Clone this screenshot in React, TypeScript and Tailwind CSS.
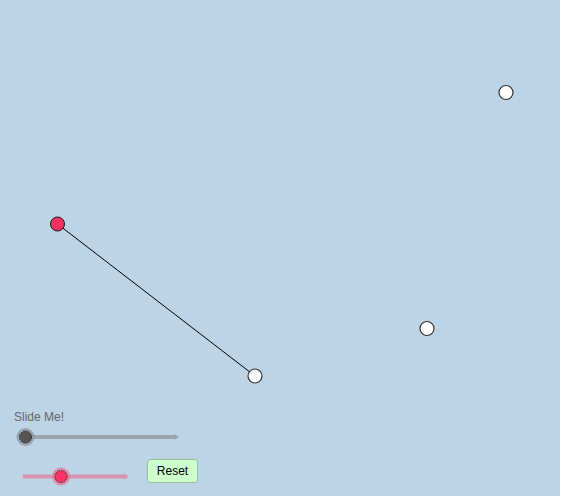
export default function App() {
  return (
    <div className="w-[562px] h-[498px] bg-white" style={{ fontFamily: '"Liberation Sans", Arial, sans-serif' }}>
      <div className="relative w-[560px] h-[496px] bg-[#bdd3e6] overflow-hidden">
        <svg className="absolute inset-0" width="560" height="496" viewBox="0 0 560 496">
          <line x1="57.5" y1="224" x2="255" y2="376" stroke="#000" strokeWidth="1" />
          <circle cx="57.5" cy="224" r="7" fill="#f4325f" stroke="#1a1a1a" strokeWidth="1" />
          <circle cx="255" cy="376" r="7" fill="#fff" stroke="#333" strokeWidth="1.2" />
          <circle cx="506" cy="92.5" r="7" fill="#fff" stroke="#333" strokeWidth="1.2" />
          <circle cx="427" cy="328.5" r="7" fill="#fff" stroke="#333" strokeWidth="1.2" />

          {/* slider 1 */}
          <line x1="24" y1="437" x2="175" y2="437" stroke="#97a6b0" strokeWidth="4" />
          <polygon points="174,434 179,437 174,440" fill="#97a6b0" />
          <circle cx="25.5" cy="437" r="9" fill="#8f969c" opacity="0.75" />
          <circle cx="25.5" cy="437" r="6" fill="#555" stroke="#222" strokeWidth="1" strokeDasharray="1.5 1" />

          {/* slider 2 */}
          <line x1="23" y1="476.5" x2="125" y2="476.5" stroke="#d893b0" strokeWidth="4" />
          <polygon points="124,473.5 129,476.5 124,479.5" fill="#d893b0" />
          <circle cx="61" cy="476.5" r="9" fill="#e07a9e" opacity="0.8" />
          <circle cx="61" cy="476.5" r="6" fill="#ff3366" stroke="#222" strokeWidth="1" strokeDasharray="1.5 1" />
        </svg>
        <div className="absolute left-[14px] top-[409px] text-[12px] leading-[16px] text-[#666]">Slide Me!</div>
        <button className="absolute left-[147px] top-[459px] w-[51px] h-[24px] rounded-[3px] border border-[#9bbf9b] bg-[#ccffcc] text-[12px] text-black">
          Reset
        </button>
      </div>
    </div>
  )
}
